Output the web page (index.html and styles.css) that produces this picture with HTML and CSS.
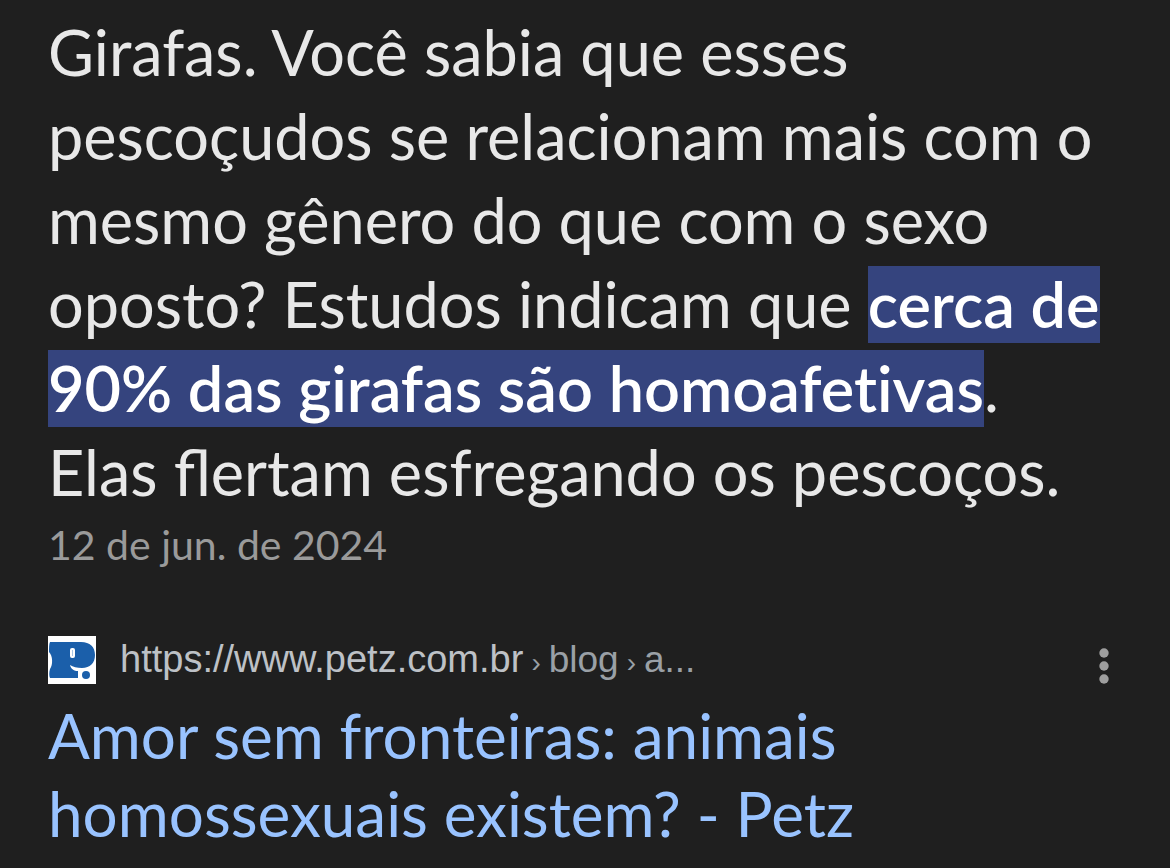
FILE: index.html
```html
<!DOCTYPE html>
<html lang="pt-BR">

<head>
    <meta charset="UTF-8">
    <meta name="viewport" content="width=device-width, initial-scale=1.0">
    <title>Amor sem fronteiras - Petz</title>
    <link rel="stylesheet" href="styles.css">
</head>

<body>
    <main class="result">
        <p class="snippet">Girafas. Você sabia que esses<br>
            pescoçudos se relacionam mais com o<br>
            mesmo gênero do que com o sexo<br>
            oposto? Estudos indicam que <mark>cerca de<br>
            90% das girafas são homoafetivas</mark>.<br>
            Elas flertam esfregando os pescoços.</p>
        <time class="date" datetime="2024-06-12">12 de jun. de 2024</time>

        <div class="source">
            <svg class="favicon" viewBox="0 0 48 48" aria-hidden="true">
                <rect width="48" height="48" fill="#fff" />
                <path fill="#1b5faa" d="M2 6H33C42 6 47 11 47 19C47 27 42 32 34 32C29 32 25 31 22 29C23 33 26 35 30 35V42H2C1 40 1 36 2 33C5 29 5 20 1 16C1 12 1 8 2 6Z" />
                <rect x="22" y="12" width="5" height="10" rx="2" fill="#fff" />
                <path fill="#a9c6e4" d="M24 14H25V20H24Z" />
                <circle cx="38" cy="39" r="4" fill="#1b5faa" />
            </svg>
            <cite class="url">https://www.petz.com.br<span class="path"><span class="sep">›</span>blog<span class="sep">›</span>a...</span></cite>
            <button class="menu" type="button" aria-label="Mais opções">
                <svg viewBox="0 0 12 36" aria-hidden="true">
                    <circle cx="6" cy="5" r="4.700" />
                    <circle cx="6" cy="18" r="4.700" />
                    <circle cx="6" cy="31" r="4.700" />
                </svg>
            </button>
        </div>

        <h3 class="title"><a href="#">Amor sem fronteiras: animais<br>
            homossexuais existem? - Petz</a></h3>
    </main>
</body>

</html>
```
FILE: styles.css
```css
* {
    box-sizing: border-box;
}

body {
    margin: 0;
    background: #1f1f1f;
    color: #e8e8e8;
    font-family: Lato, "Open Sans", sans-serif;
}

.result {
    padding: 10px 48px 0;
}

.snippet {
    margin: 0;
    font-size: 63px;
    line-height: 84px;
    white-space: nowrap;
}

.snippet mark {
    padding-bottom: 2px;
    background: #35447e;
    color: #fff;
    font-weight: 600;
    font-variant-ligatures: none;
}

.date {
    display: block;
    color: #9a9a9a;
    font-size: 41px;
    line-height: 62px;
}

.source {
    display: flex;
    align-items: flex-start;
    gap: 24px;
    margin-top: 60px;
}

.favicon {
    width: 48px;
    height: 48px;
}

.url {
    flex: 1;
    color: #bdc1c6;
    font: 38px/46px "Liberation Sans", Arial, sans-serif;
}

.path {
    color: #9aa0a6;
    font-size: 37px;
}

.sep {
    margin: 0 8px;
    font-size: 28px;
}

.menu {
    margin: 12px 12px 0 0;
    padding: 0;
    border: 0;
    background: none;
    cursor: pointer;
}

.menu svg {
    display: block;
    width: 12px;
    height: 36px;
    fill: #9e9e9e;
}

.title {
    margin: 10px 0 0;
    font-size: 62px;
    font-weight: 400;
    line-height: 78px;
    white-space: nowrap;
}

.title a {
    color: #99c3ff;
    text-decoration: none;
}
```
